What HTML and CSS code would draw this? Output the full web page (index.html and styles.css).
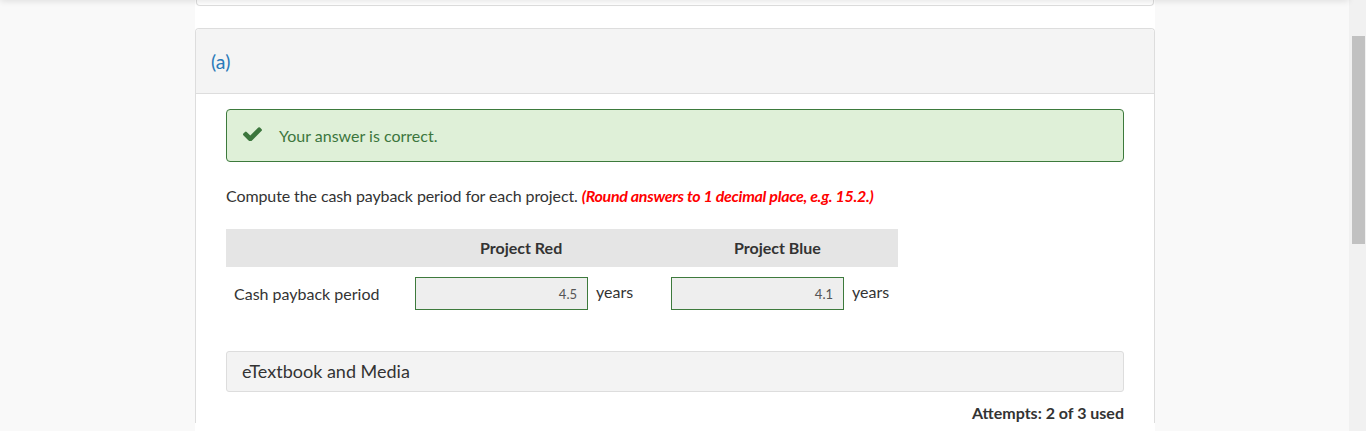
FILE: index.html
```html
<!DOCTYPE html>
<html>
<head>
<meta charset="utf-8">
<link rel="stylesheet" href="styles.css">
</head>
<body>
<div class="viewport">
  <div class="topshadow"></div>
  <div class="column">
    <div class="topcard"></div>
    <div class="panel">
      <div class="panel-head"><span class="part">(a)</span></div>
      <div class="panel-body">
        <div class="alert">
          <svg class="check" viewBox="121 362 1550 1064" width="19" height="14"><path fill="#3c763d" d="M1671 566q0 40-28 68l-724 724-136 136q-28 28-68 28t-68-28l-136-136-362-362q-28-28-28-68t28-68l136-136q28-28 68-28t68 28l294 295 656-657q28-28 68-28t68 28l136 136q28 28 28 68z"/></svg>
          <span>Your answer is correct.</span>
        </div>
        <p class="question">Compute the cash payback period for each project. <em class="note">(Round answers to 1 decimal place, e.g. 15.2.)</em></p>
        <div class="grid">
          <div class="th"></div>
          <div class="th th-red">Project Red</div>
          <div class="th th-blue">Project Blue</div>
          <div class="label">Cash payback period</div>
          <div class="cell"><span class="input">4.5</span><span class="unit">years</span></div>
          <div class="cell"><span class="input">4.1</span><span class="unit">years</span></div>
        </div>
        <div class="media">eTextbook and Media</div>
        <div class="attempts">Attempts: 2 of 3 used</div>
      </div>
    </div>
  </div>
</div>
<div class="scrollbar"><div class="thumb"></div></div>
</body>
</html>
```
FILE: styles.css
```css
html, body {
  margin: 0;
  padding: 0;
  height: 431px;
  overflow: hidden;
}
body {
  display: flex;
  background: #f9f9f9;
  font-family: Lato, "Open Sans", sans-serif;
  color: #333;
}
.viewport {
  flex: 1;
  position: relative;
  height: 431px;
}
.topshadow {
  position: absolute;
  left: 0;
  right: 0;
  top: -6px;
  height: 6px;
  box-shadow: 0 1px 6px rgba(0,0,0,0.12);
  z-index: 2;
}
.column {
  width: 960px;
  margin-left: 195px;
  background: #fff;
  height: 431px;
}
.topcard {
  height: 5px;
  margin-left: 1px;
  margin-right: 1px;
  border: 1px solid #ddd;
  border-top: none;
  border-radius: 0 0 4px 4px;
}
.panel {
  margin-top: 22px;
  border: 1px solid #ddd;
  border-bottom: none;
  border-radius: 4px 4px 0 0;
}
.panel-head {
  height: 64px;
  background: #f4f4f4;
  border-bottom: 1px solid #ddd;
  border-radius: 4px 4px 0 0;
  display: flex;
  align-items: center;
  padding-left: 15px;
}
.part {
  font-size: 19.5px;
  color: #2a7ab9;
  margin-top: 1px;
}
.panel-body {
  padding: 15px 30px 0 30px;
}
.alert {
  height: 51px;
  border: 1px solid #3d7a3c;
  border-radius: 4px;
  background: #dff0d8;
  color: #3c763d;
  display: flex;
  align-items: center;
  font-size: 16px;
  padding-left: 16px;
}
.check {
  margin-right: 17px;
  margin-top: -4px;
}
.question {
  margin: 24px 0 0 0;
  font-size: 16px;
  line-height: 20px;
  letter-spacing: -0.1px;
}
.note {
  color: #ff0000;
  font-weight: bold;
  letter-spacing: -0.3px;
}
.grid {
  margin-top: 23px;
  width: 672px;
  display: grid;
  grid-template-columns: 189px 256px 227px;
  grid-template-rows: 38px auto;
  row-gap: 10px;
}
.th {
  background: #e5e5e5;
  font-weight: bold;
  font-size: 16px;
  display: flex;
  align-items: center;
  padding-bottom: 2px;
  box-sizing: border-box;
}
.th-red { padding-left: 65px; }
.th-blue { padding-left: 63px; }
.label {
  font-size: 16px;
  padding-left: 8px;
  display: flex;
  align-items: center;
  padding-bottom: 1px;
}
.cell {
  display: flex;
  align-items: center;
}
.input {
  box-sizing: border-box;
  width: 173px;
  height: 33px;
  border: 1px solid #3d7a3c;
  background: #eeeeee;
  font-size: 13px;
  color: #555;
  display: flex;
  align-items: center;
  justify-content: flex-end;
  padding-right: 10px;
}
.unit {
  font-size: 16px;
  margin-left: 8px;
  margin-top: -4px;
}
.media {
  margin-top: 41px;
  border: 1px solid #ddd;
  border-radius: 3px;
  background: #f3f3f3;
  font-size: 18px;
  display: flex;
  align-items: center;
  padding-left: 15px;
  padding-bottom: 2px;
  box-sizing: border-box;
  height: 41px;
}
.attempts {
  margin-top: 11px;
  text-align: right;
  font-weight: bold;
  font-size: 16px;
  line-height: 20px;
}
.scrollbar {
  width: 17px;
  height: 431px;
  background: #f1f1f1;
  padding-top: 36px;
  box-sizing: border-box;
  display: flex;
  justify-content: center;
}
.thumb {
  width: 13px;
  height: 208px;
  background: #c1c1c1;
  margin-left: 1px;
}
```
